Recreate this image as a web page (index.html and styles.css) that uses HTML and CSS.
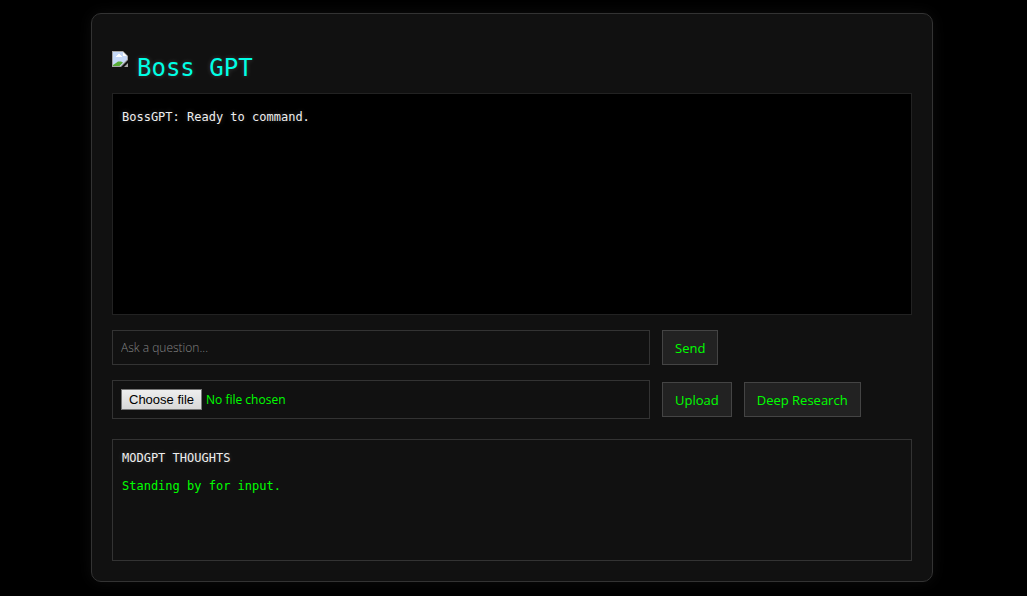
FILE: index.html
```html
<!DOCTYPE html>
<html lang="en">
<head>
<meta charset="utf-8">
<meta name="viewport" content="width=device-width, initial-scale=1">
<title>Boss GPT</title>
<link rel="stylesheet" href="styles.css">
</head>
<body>
<main class="panel">
  <header class="header">
    <svg class="logo" viewBox="0 0 16 16" width="16" height="16" aria-hidden="true">
      <path fill="#a5a5a5" d="M0 0h11l5 5v4l-7 7H0z"/>
      <path fill="#c6d9f8" d="M1 1h10v4h4v3.500l-6.500 6.500H1z"/>
      <path fill="#fff" d="M4 6V5h1V4h1V3h2v1h1v1h1v1zM11 1l4 4h-4z"/>
      <path fill="#58ac36" d="M1 15v-1l3-2 2-1.500h3l2 1-3.500 3.500z"/>
      <path fill="#a5a5a5" d="M0 15h8v1H0zM16 12v4h-4z"/>
    </svg>
    <h1 class="title">Boss GPT</h1>
  </header>
  <section class="chat">
    <p class="message">BossGPT: Ready to command.</p>
  </section>
  <form class="row">
    <input class="field" type="text" placeholder="Ask a question..." aria-label="Ask a question">
    <button class="button" type="button">Send</button>
  </form>
  <form class="row">
    <label class="field file">
      <input class="file-input" type="file">
      <span class="file-button">Choose file</span>
      <span>No file chosen</span>
    </label>
    <button class="button" type="button">Upload</button>
    <button class="button" type="button">Deep Research</button>
  </form>
  <section class="thoughts">
    <h2 class="thoughts-title">MODGPT THOUGHTS</h2>
    <p class="thought">Standing by for input.</p>
  </section>
</main>
</body>
</html>
```
FILE: styles.css
```css
* {
  box-sizing: border-box;
}

body {
  margin: 0;
  padding: 13px 17px 14px 14px;
  background: #000;
  color: #00ff00;
  font-family: "DejaVu Sans Mono", monospace;
  font-size: 12px;
  line-height: 16px;
}

.panel {
  max-width: 842px;
  margin: 0 auto;
  padding: 37px 20px 20px;
  background: #111;
  border: 1px solid #333;
  border-radius: 10px;
  box-shadow: 0 0 15px rgba(255, 255, 255, 0.05);
}

.header {
  display: flex;
  gap: 9px;
  margin-bottom: 8px;
}

.logo {
  flex: none;
}

.title {
  margin: 0;
  color: #00ffe5;
  font-size: 24px;
  font-weight: 400;
  line-height: 34px;
  text-shadow: 0 0 5px rgba(255, 255, 255, 0.2);
}

.chat {
  min-height: 222px;
  padding: 15px 9px;
  background: #000;
  border: 1px solid #222;
}

.message,
.thoughts-title {
  margin: 0;
  color: #eee;
  font-size: 12px;
  font-weight: 400;
  text-shadow: 0 0 5px rgba(255, 255, 255, 0.2);
}

.row {
  display: flex;
  align-items: center;
  gap: 12px;
  margin-top: 15px;
}

.field {
  width: 67.25%;
  height: 35px;
  padding: 8px;
  background: #111;
  border: 1px solid #333;
  border-radius: 0;
  color: #00ff00;
  font-family: "Open Sans", sans-serif;
  font-size: 12px;
  font-weight: 400;
}

.field::placeholder {
  color: #858585;
  font-weight: 300;
  opacity: 1;
}

.file {
  position: relative;
  display: flex;
  align-items: center;
  gap: 4px;
  height: 39px;
}

.file-input {
  position: absolute;
  inset: 0;
  width: 100%;
  opacity: 0;
}

.file-button {
  padding: 2px 7px;
  background: linear-gradient(#eee, #d8d8d8);
  border: 1px solid #777;
  color: #000;
  font-family: "Liberation Sans", Arial, sans-serif;
  font-size: 13px;
  line-height: 15px;
}

.button {
  height: 35px;
  padding: 0 12px;
  background: #222;
  border: 1px solid #444;
  color: #00ff00;
  font-family: "Open Sans", sans-serif;
  font-size: 13px;
}

.thoughts {
  min-height: 122px;
  margin-top: 20px;
  padding: 10px 9px;
  border: 1px solid #333;
}

.thought {
  margin: 12px 0 0;
}
```
